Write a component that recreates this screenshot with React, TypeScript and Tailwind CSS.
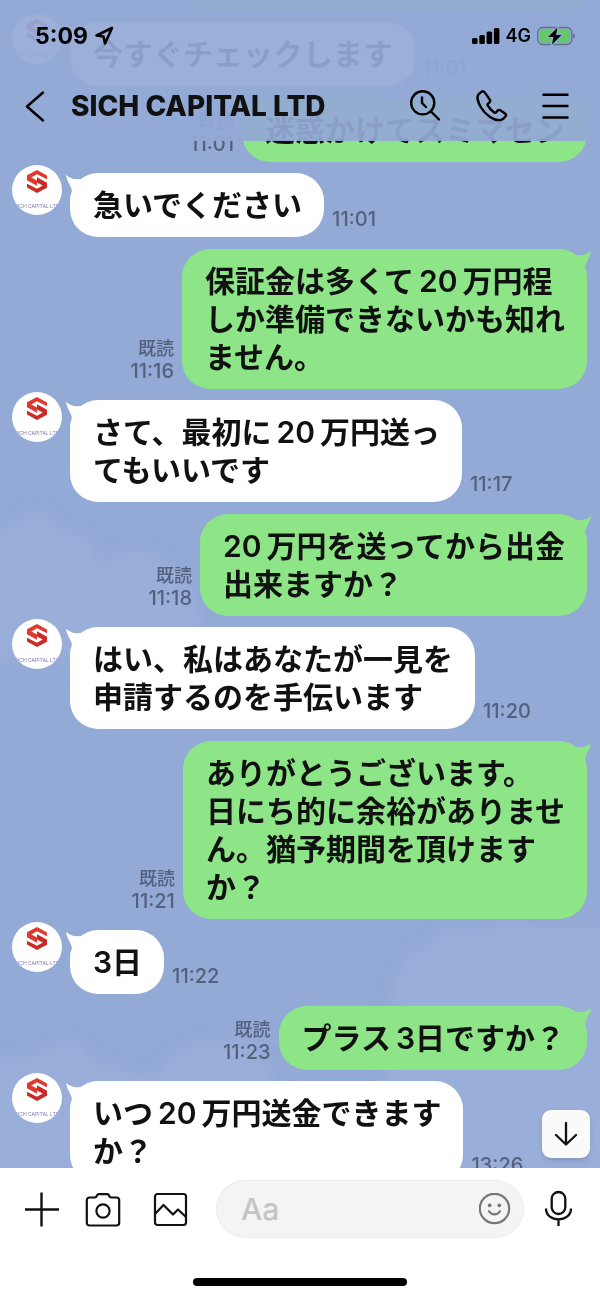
import { Fragment, ReactNode } from 'react';

type Message = {
  from: 'them' | 'me';
  time: string;
  lines: ReactNode[];
};

// digits keep a small gap to the kanji and kana around them
const Twenty = ({ first = false }: { first?: boolean }) => (
  <span className={first ? 'mr-[5px]' : 'mx-[5px]'}>20</span>
);

const messages: Message[] = [
  { from: 'them', time: '11:01', lines: ['今すぐチェックします'] },
  { from: 'me', time: '11:01', lines: ['迷惑かけてスミマセン'] },
  { from: 'them', time: '11:01', lines: ['急いでください'] },
  {
    from: 'me',
    time: '11:16',
    lines: [<>保証金は多くて<Twenty />万円程</>, 'しか準備できないかも知れ', 'ません。'],
  },
  { from: 'them', time: '11:17', lines: [<>さて、最初に<Twenty />万円送っ</>, 'てもいいです'] },
  { from: 'me', time: '11:18', lines: [<><Twenty first />万円を送ってから出金</>, '出来ますか？'] },
  { from: 'them', time: '11:20', lines: ['はい、私はあなたが一見を', '申請するのを手伝います'] },
  {
    from: 'me',
    time: '11:21',
    lines: ['ありがとうございます。', '日にち的に余裕がありませ', 'ん。猶予期間を頂けます', 'か？'],
  },
  { from: 'them', time: '11:22', lines: ['3日'] },
  { from: 'me', time: '11:23', lines: [<>プラス<span className="ml-[5px]">3</span>日ですか？</>] },
  { from: 'them', time: '13:26', lines: [<>いつ<Twenty />万円送金できます</>, 'か？'] },
];

function Avatar() {
  return (
    <div className="relative size-[50px] shrink-0 overflow-hidden rounded-full bg-white">
      <svg viewBox="0 0 50 50" className="size-full">
        <path d="M25 5L35 10.500V14.200L25 9.200 19.300 12.500 25 15.500V20.800L15 15.300V10.300z" fill="#dd3a30" />
        <path d="M25 28L15 22.500V18.800L25 23.800 30.700 20.500 25 17.500V12.200L35 17.700V22.700z" fill="#c92c26" />
      </svg>
      <span className="absolute inset-x-0 bottom-1 flex justify-center whitespace-nowrap text-[5px] leading-[10px] text-[#7d78b4]">
        SICH CAPITAL LTD
      </span>
    </div>
  );
}

function Bubble({ message }: { message: Message }) {
  const mine = message.from === 'me';
  return (
    <div
      className={`relative rounded-[28px] py-[13px] pl-[23px] pr-[22px] text-[30px] leading-[38px] font-semibold whitespace-nowrap text-[#111] ${
        mine ? 'bg-[#8de587]' : 'mt-2 bg-white'
      }`}
    >
      <svg
        viewBox="0 0 24 24"
        className={`absolute top-0 size-6 ${mine ? '-right-[5px] -scale-x-100 text-[#8de587]' : '-left-[5px] text-white'}`}
        fill="currentColor"
      >
        <path d="M1 2c4 3 8 5 14 4l6 2-14 10C6 12 2 9 1 2z" />
      </svg>
      <p className="relative">
        {message.lines.map((line, i) => (
          <Fragment key={i}>
            {i > 0 && <br />}
            {line}
          </Fragment>
        ))}
      </p>
    </div>
  );
}

function MessageRow({ message }: { message: Message }) {
  const time = <time className="block text-[20px]">{message.time}</time>;
  if (message.from === 'me') {
    return (
      <li className="mt-3 flex items-end justify-end gap-2 pr-[13px]">
        <div className="mb-[6px] text-right text-[18px] leading-[23px] font-medium text-[#53617c]">
          <span className="block">既読</span>
          {time}
        </div>
        <Bubble message={message} />
      </li>
    );
  }
  return (
    <li className="mt-[3px] flex items-start pl-3">
      <Avatar />
      <div className="ml-2 flex items-end gap-2">
        <Bubble message={message} />
        <div className="mb-[6px] leading-[23px] font-medium text-[#53617c]">{time}</div>
      </div>
    </li>
  );
}

function Wallpaper() {
  return (
    <svg className="absolute inset-0 size-full" viewBox="0 0 600 1168" preserveAspectRatio="none">
      <defs>
        <filter id="soft" x="-20%" y="-20%" width="140%" height="140%">
          <feGaussianBlur stdDeviation="7" />
        </filter>
      </defs>
      <g filter="url(#soft)" fill="#9bb1da">
        <path d="M-20 550q20-25 30-22 12-20 35-17 14 8 16 22 28-4 36 14v24q20-30 50-20 40 15 50 50 20 40-20 60H-20z" opacity=".7" />
        <path d="M390 1000q10-50 40-55 20-30 40-10 20-15 60-10h90v250H380z" opacity=".7" />
        <path d="M-20 1075q30-25 60-20 40-30 50 5 40 10 60 20 40-50 90-40 40 10 60 130H-20z" opacity=".7" />
      </g>
    </svg>
  );
}

function Header() {
  return (
    <header className="absolute inset-x-0 top-0 bg-[#93a9d6]/93 text-black">
      <div className="flex h-[71px] items-center justify-between pr-[25px] pl-[35px]">
        <div className="flex items-center gap-[6px] text-[23px] leading-7 font-bold">
          5:09
          <svg viewBox="0 0 20 20" className="size-5" fill="none" stroke="currentColor" strokeWidth="2.600" strokeLinejoin="round">
            <path d="M18 2L2.500 9.500l7 1L11 17.500z" />
          </svg>
        </div>
        <div className="flex items-center gap-[6px] text-[18px] leading-7 font-semibold">
          <svg viewBox="0 0 28 18" className="h-[18px] w-7" fill="currentColor">
            <rect x="0" y="11" width="5.500" height="6" rx="1.500" />
            <rect x="7.300" y="8" width="5.500" height="9" rx="1.500" />
            <rect x="14.600" y="4.500" width="5.500" height="12.500" rx="1.500" />
            <rect x="21.900" y="1" width="5.500" height="16" rx="1.500" />
          </svg>
          4G
          <svg viewBox="0 0 38 20" className="h-5 w-[38px]">
            <rect x=".8" y="1.500" width="34" height="17" rx="5" fill="none" stroke="#5f6f8f" strokeWidth="1.300" />
            <rect x="2.800" y="3.500" width="30" height="13" rx="3.200" fill="#62c965" />
            <path d="M36 7.500q2 .8 2 2.500t-2 2.500z" fill="#5f6f8f" />
            <path d="M20.500 1.500L11 11h5.500L15 18.500 24.500 9H19z" fill="#000" stroke="#93a9d6" strokeWidth="2.400" paintOrder="stroke" />
          </svg>
        </div>
      </div>
      <div className="flex h-[70px] items-center pr-[30px] pl-6">
        <button aria-label="戻る" className="mr-[25px]">
          <svg viewBox="0 0 22 32" className="h-8 w-[22px]" fill="none" stroke="currentColor" strokeWidth="2.400" strokeLinecap="round" strokeLinejoin="round">
            <path d="M19 2.500L3 16.500 19 30.500" />
          </svg>
        </button>
        <h1 className="text-[28px] leading-8 font-extrabold whitespace-nowrap text-[#111]">SICH CAPITAL LTD</h1>
        <div className="ml-auto flex items-center gap-[34px]">
          <button aria-label="検索">
            <svg viewBox="0 0 32 32" className="size-8" fill="none" stroke="currentColor" strokeWidth="2.400" strokeLinecap="round" strokeLinejoin="round">
              <circle cx="12.700" cy="12.800" r="11.600" />
              <path d="M12 7.500v5.500l4 4M21 21.500l8 8" />
            </svg>
          </button>
          <button aria-label="通話">
            <svg viewBox="0 0 32 32" className="size-8" fill="none" stroke="currentColor" strokeWidth="2.400" strokeLinejoin="round">
              <path d="M5.500 1.800L2.600 4.200C1 6 1.200 11 5 17.500 9.500 25 18 31 24.500 30c2-.4 4-1.800 5.200-3.800.6-1 .3-2-.7-2.700l-4.700-3.200c-1-.6-2-.5-2.700.3l-1.400 1.600c-.6.7-1.300.7-2 .2-2.800-1.800-5-4.200-6.500-7-.4-.7-.2-1.300.3-1.800l1.500-1.300c.8-.8.9-1.700.3-2.700L8.700 2.400c-.8-1.200-2.100-1.400-3.200-.6z" />
            </svg>
          </button>
          <button aria-label="メニュー">
            <svg viewBox="0 0 28 32" className="h-8 w-7" fill="none" stroke="currentColor" strokeWidth="2.600">
              <path d="M.5 4.800h26M.5 16h26M.5 27.500h26" />
            </svg>
          </button>
        </div>
      </div>
    </header>
  );
}

function InputBar() {
  return (
    <footer className="bg-white text-[#111]">
      <div className="flex items-center pt-3 pr-6 pl-6">
        <button aria-label="追加">
          <svg viewBox="0 0 36 36" className="size-9" fill="none" stroke="currentColor" strokeWidth="2.400">
            <path d="M1 18.500h34M17.500 1.500v34" />
          </svg>
        </button>
        <button aria-label="カメラ" className="ml-[25px]">
          <svg viewBox="0 0 36 36" className="size-9" fill="none" stroke="currentColor" strokeWidth="2.200" strokeLinejoin="round">
            <path d="M4.500 6.500h5.300c1.500 0 1.700-.8 2.200-2 .4-1 .8-1.400 1.800-1.400h8.400c1 0 1.400.4 1.800 1.400.5 1.200.7 2 2.200 2h5.300c1.600 0 2.700 1 2.700 2.700v22.600c0 1.700-1 2.700-2.700 2.700h-27c-1.700 0-2.700-1-2.700-2.700V9.200C1.800 7.500 2.900 6.500 4.500 6.500z" />
            <circle cx="18" cy="20" r="6.600" />
          </svg>
        </button>
        <button aria-label="写真" className="ml-[31px]">
          <svg viewBox="0 0 36 36" className="size-9" fill="none" stroke="currentColor" strokeWidth="2.200" strokeLinejoin="round">
            <rect x="3" y="3" width="31" height="31" rx="2.500" />
            <path d="M3 23l8.500-9L21 23.500l5-5 8 7.500" />
          </svg>
        </button>
        <div className="ml-7 flex h-[58px] min-w-0 flex-1 items-center rounded-full border border-[#ececec] bg-[#f4f4f4] pr-3 pl-6">
          <input
            aria-label="メッセージを入力"
            placeholder="Aa"
            className="min-w-0 flex-1 bg-transparent text-[30px] leading-9 font-medium outline-none placeholder:text-[#c4c4c4]"
          />
          <button aria-label="スタンプ">
            <svg viewBox="0 0 32 32" className="size-8" fill="none" stroke="#777" strokeWidth="2.200" strokeLinecap="round">
              <circle cx="15.500" cy="15.500" r="14.700" />
              <path d="M10 18.200c2.500 4.200 8.500 4.200 11 0" />
              <circle cx="10.700" cy="12.300" r=".8" fill="#777" />
              <circle cx="20.300" cy="12.300" r=".8" fill="#777" />
            </svg>
          </button>
        </div>
        <button aria-label="音声" className="ml-[18px]">
          <svg viewBox="0 0 34 38" className="h-[38px] w-[34px]" fill="none" stroke="currentColor" strokeWidth="2.300">
            <rect x="9.700" y="2" width="13.600" height="22" rx="6.800" />
            <path d="M4 18.500c0 14.500 25 14.500 25 0M16.500 29.500v6.500" />
          </svg>
        </button>
      </div>
      <div className="flex justify-center pt-10 pb-[13px]">
        <div className="h-2 w-[214px] rounded-full bg-black" />
      </div>
    </footer>
  );
}

export default function App() {
  return (
    <div className="flex h-screen flex-col overflow-hidden font-['Inter','Noto_Sans_CJK_JP',sans-serif]" lang="ja">
      <main className="relative min-h-0 flex-1 overflow-hidden bg-[#93a9d6]">
        <Wallpaper />
        <ul className="relative flex flex-col">
          <li className="-mt-[53px] mr-[13px] h-16 w-[405px] self-end rounded-[28px] bg-[#8de587]" />
          {messages.map((message, i) => (
            <MessageRow key={i} message={message} />
          ))}
        </ul>
        <Header />
        <button
          aria-label="最新のメッセージへ"
          className="absolute right-[10px] bottom-[10px] flex size-12 items-center justify-center rounded-[9px] bg-[#fafafa] shadow-md"
        >
          <svg viewBox="0 0 24 24" className="size-6" fill="none" stroke="#111" strokeWidth="2.300" strokeLinecap="round" strokeLinejoin="round">
            <path d="M12 1v21.500M2 13l10 9.500L22 13" />
          </svg>
        </button>
      </main>
      <InputBar />
    </div>
  );
}
